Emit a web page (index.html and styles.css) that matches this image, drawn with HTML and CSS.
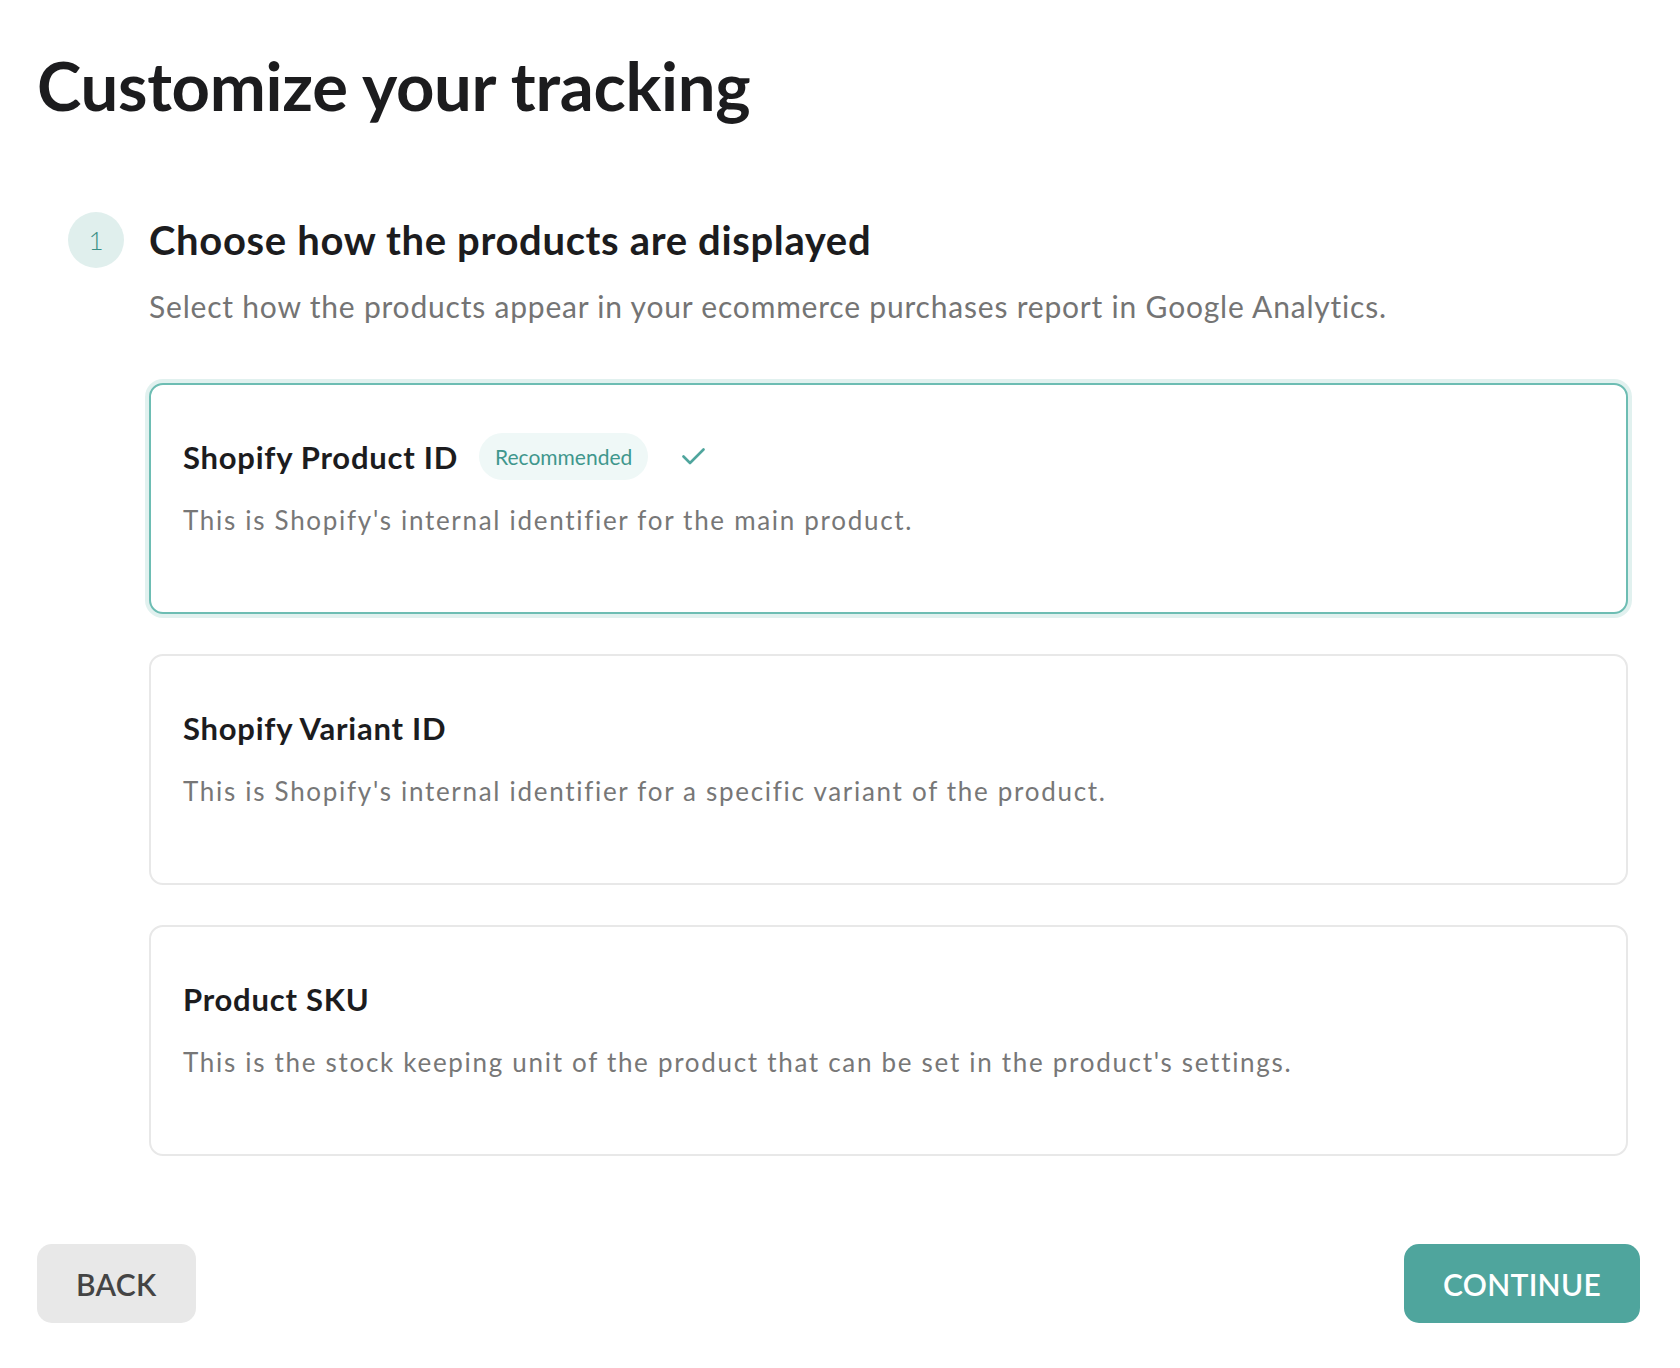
FILE: index.html
```html
<!DOCTYPE html>
<html lang="en">
<head>
<meta charset="utf-8">
<title>Customize your tracking</title>
<link rel="stylesheet" href="styles.css">
</head>
<body>
<main class="page">
  <h1 class="title">Customize your tracking</h1>
  <section class="step">
    <div class="step-head">
      <span class="step-num">1</span>
      <h2 class="step-title">Choose how the products are displayed</h2>
    </div>
    <div class="step-body">
      <p class="step-desc">Select how the products appear in your ecommerce purchases report in Google Analytics.</p>
      <div class="options">
        <div class="option selected">
          <div class="option-head">
            <span class="option-title">Shopify Product ID</span>
            <span class="badge">Recommended</span>
            <svg class="check" width="23" height="17" viewBox="0 0 23 17" aria-hidden="true"><polyline points="1.5,8.5 8,15 21.5,1.5" fill="none" stroke="#4fa59d" stroke-width="2.6" stroke-linecap="round" stroke-linejoin="round"/></svg>
          </div>
          <p class="option-desc">This is Shopify's internal identifier for the main product.</p>
        </div>
        <div class="option">
          <div class="option-head">
            <span class="option-title">Shopify Variant ID</span>
          </div>
          <p class="option-desc">This is Shopify's internal identifier for a specific variant of the product.</p>
        </div>
        <div class="option">
          <div class="option-head">
            <span class="option-title">Product SKU</span>
          </div>
          <p class="option-desc">This is the stock keeping unit of the product that can be set in the product's settings.</p>
        </div>
      </div>
    </div>
  </section>
  <div class="actions">
    <button class="btn btn-back" type="button">BACK</button>
    <button class="btn btn-continue" type="button">CONTINUE</button>
  </div>
</main>
</body>
</html>
```

FILE: styles.css
```css
* { box-sizing: border-box; }
html, body { margin: 0; padding: 0; background: #ffffff; }
body {
  font-family: Lato, "Noto Sans", "DejaVu Sans", sans-serif;
  color: #1d1d1f;
}
.page {
  width: 1680px;
  padding: 45px 40px 0 37px;
}
.title {
  margin: 0;
  font-size: 67px;
  line-height: 80px;
  font-weight: 700;
  color: #1c1c1e;
  letter-spacing: -0.3px;
}
.step {
  margin: 87px 0 0 31px;
}
.step-head {
  display: flex;
  align-items: center;
  gap: 25px;
  height: 56px;
}
.step-num {
  flex: 0 0 56px;
  width: 56px;
  height: 56px;
  border-radius: 50%;
  background: #e0efed;
  color: #3b8f86;
  font-size: 26px;
  font-weight: 300;
  display: flex;
  align-items: center;
  justify-content: center;
}
.step-title {
  margin: 0;
  font-size: 40px;
  line-height: 56px;
  font-weight: 700;
  letter-spacing: 0.65px;
  color: #1c1c1e;
}
.step-body {
  margin-left: 81px;
  margin-right: 12px;
}
.step-desc {
  margin: 18px 0 0;
  font-size: 30px;
  line-height: 40px;
  color: #747474;
  letter-spacing: 0.8px;
}
.options {
  margin-top: 57px;
  display: flex;
  flex-direction: column;
  gap: 40px;
}
.option {
  height: 231px;
  border: 2px solid #e8e8e8;
  border-radius: 14px;
  padding: 48px 32px 0;
  background: #fff;
}
.option.selected {
  border-color: #6dbdb3;
  box-shadow: 0 0 0 4px #e1f1ef;
}
.option-head {
  display: flex;
  align-items: center;
  height: 47px;
}
.option-title {
  font-size: 31px;
  line-height: 36px;
  font-weight: 700;
  letter-spacing: 0.75px;
  color: #1c1c1e;
}
.badge {
  margin-left: 21px;
  height: 47px;
  padding: 0 16px;
  border-radius: 24px;
  background: #eff8f7;
  color: #3f978d;
  font-size: 21px;
  display: flex;
  align-items: center;
}
.check {
  margin-left: 34px;
  display: block;
}
.option-desc {
  margin: 22px 0 0;
  font-size: 26px;
  line-height: 36px;
  color: #777777;
  letter-spacing: 1.7px;
}
.actions {
  margin-top: 88px;
  display: flex;
  justify-content: space-between;
}
.btn {
  height: 79px;
  padding: 0 39px;
  border: none;
  border-radius: 15px;
  font-family: Lato, "Noto Sans", sans-serif;
  font-size: 30px;
  font-weight: 600;
  letter-spacing: 0.3px;
  cursor: pointer;
}
.btn-back {
  background: #e8e8e8;
  color: #444444;
}
.btn-continue {
  background: #4fa59d;
  color: #ffffff;
}
```
